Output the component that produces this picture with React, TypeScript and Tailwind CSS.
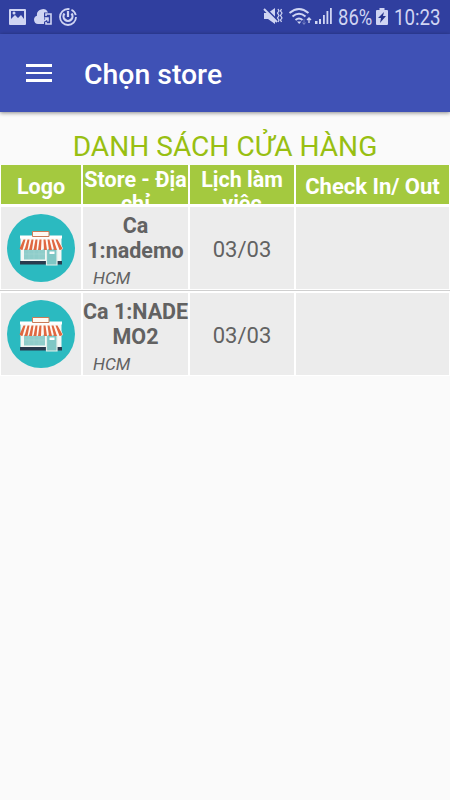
import React from "react";

const stores = [
  { name: ["Ca", "1:nademo"], address: "HCM", date: "03/03" },
  { name: ["Ca 1:NADE", "MO2"], address: "HCM", date: "03/03" },
];

const columns = "grid grid-cols-[80px_105px_104px_153px] gap-x-[2px] pl-px pr-px";

function StatusBar() {
  return (
    <div className="flex h-[34px] shrink-0 items-center justify-between bg-[#303f9f] pl-[9px] pr-[10px] text-[#d0d5f3]">
      <svg width="70" height="18" viewBox="9 8 70 18" fill="none" aria-hidden="true">
        <path fill="currentColor" fillRule="evenodd" d="M10 9h15q1 0 1 1v14q0 1-1 1H10q-1 0-1-1V10q0-1 1-1Zm1 2v8l4-4 3 3 3-3 3 4v-8H11Zm3 .5a1.500 1.500 0 1 1 0 3 1.500 1.500 0 0 1 0-3Z" />
        <path fill="currentColor" d="M45 24h-7a4.200 4.200 0 0 1-1-8.200 5.800 5.800 0 0 1 11-3.300h-4V24Z" />
        <path stroke="currentColor" strokeWidth="1.600" d="M46 16v-2h5v10h-5v-2M44 21l4-3m-3.500 0H48v3.500" />
        <circle cx="68" cy="17" r="8" stroke="currentColor" strokeWidth="1.800" strokeDasharray="39 2 7 2" />
        <path stroke="currentColor" strokeWidth="2.200" d="M68 11v6M64.500 13.500a4.500 4.500 0 1 0 7 0" />
      </svg>
      <div className="flex h-full items-center">
        <svg width="72" height="20" viewBox="262 8 72 20" fill="none" aria-hidden="true">
          <path fill="currentColor" d="M264 14h4l7-5v16l-7-5h-4Z" />
          <path d="m264 8 14 14" stroke="#303f9f" strokeWidth="2" />
          <path d="m264 10 13 13" stroke="currentColor" strokeWidth="1.900" />
          <path d="m278 10 1 2-1.500 2 1.500 2.500-1.500 2.500 1.500 2-1 2M281.500 10l-1 2 1.500 2-1.500 2.500 1.500 2.500-1.500 2 1 2" stroke="currentColor" strokeWidth="1.200" />
          <path d="M289.500 14q9.500-8 19 0M292.500 17.500q6.500-5.500 13 0M295.500 21q3.500-3 7 0" stroke="currentColor" strokeWidth="2" />
          <path d="m297 22.500 2.200 2.500 2.200-2.500Z" fill="currentColor" />
          <path d="M304 20v5m-1.500-1.500 1.500 2 1.500-2" stroke="currentColor" strokeOpacity=".4" />
          <path d="M309 24v-5m-2 2 2-2 2 2" stroke="currentColor" strokeWidth="1.400" />
          <path d="M315 25v-3h2.500v3Zm4 0v-5h2v5Zm4 0v-9h1.800v9Zm3.500 0V12h1.800v13Zm3.500 0V9h1.800v16Z" fill="currentColor" />
        </svg>
        <span className="ml-1 w-[34px] text-[22px] leading-[34px]">
          <span className="inline-block origin-left translate-y-px scale-x-[.84]">86%</span>
        </span>
        <svg className="ml-1" width="12" height="18" viewBox="0 0 12 18" aria-hidden="true">
          <path d="M3.500 0h5v2H11q1 0 1 1v13q0 1-1 1H1q-1 0-1-1V3q0-1 1-1h2.500Z" fill="currentColor" />
          <path d="m8 4-6 6h3l-1 5 6-7H7Z" fill="#26348d" />
        </svg>
        <span className="ml-[6px] w-[46px] text-[22px] leading-[34px]">
          <span className="inline-block origin-left translate-y-px scale-x-[.85]">10:23</span>
        </span>
      </div>
    </div>
  );
}

function StoreLogo() {
  return (
    <svg width="76" height="76" viewBox="0 0 76 76" role="img" aria-label="Store">
      <circle cx="38" cy="38" r="34" fill="#2bbac0" />
      <path d="M17.500 28h41v24h-41Z" fill="#f4f8f5" />
      <path d="M17 25.500h42v3H17Z" fill="#fff" />
      <path d="M29.500 21.500h16.500v5H29.500Z" fill="#fffaf2" stroke="#c97c58" />
      <path d="M21 38h21v11.500H21Z" fill="#8fcdca" />
      <path d="M21 44h21M26 39v10m5-10v10m5-10v10" stroke="#a5d7d3" strokeWidth=".5" />
      <path d="M17 51h42v3.500H17Z" fill="#293b4e" />
      <path d="M43.500 38h10.500v17H43.500Z" fill="#7fc7c5" stroke="#e2ede9" strokeWidth="1.200" />
      <path d="M46.500 41.500h5v2.500h-5Z" fill="#fff" />
      <path d="M20.500 29.500h35l4.500 9q-2 3-4.800 0-2.400 3-4.800 0-2.400 3-4.800 0-2.400 3-4.800 0-2.400 3-4.800 0-2.400 3-4.800 0-2.400 3-4.800 0-2.400 3-4.800 0-2.400 3-4.800 0Z" fill="#fffaf4" />
      <path d="M20.500 29.500h2l-3 10.500q-1.500 0-3-1.500Zm4 0h2l-2 10.500h-3Zm4 0h2l-1.500 10.500h-3Zm4 0h2l-1 10.500h-3Zm4 0h2l-.5 10.500h-3Zm4 0h2l1.500 10.500h-3Zm4 0h2l2.500 10.500h-3Zm4 0h2l3.500 10.500h-3Zm4 0h2l5 9q-1 1.500-3 1.500Z" fill="#df6841" />
    </svg>
  );
}

function HeaderCell({ children, top = false, size = "text-[21.500px]" }: { children: React.ReactNode; top?: boolean; size?: string }) {
  return (
    <div className={`flex h-[39px] justify-center overflow-hidden bg-[#a4c93f] text-center font-bold leading-[24px] text-white ${size} ${top ? "items-start pt-[3px]" : "items-center pt-[4px]"}`}>
      <div className="whitespace-nowrap">{children}</div>
    </div>
  );
}

export default function App() {
  return (
    <div className="flex h-[800px] w-[450px] flex-col overflow-hidden bg-[#fafafa] font-[Roboto,'Noto_Sans',sans-serif]">
      <StatusBar />
      <header className="flex h-[78px] shrink-0 items-center bg-[#3f51b5] shadow-[0_1px_4px_rgba(0,0,0,.45)]">
        <button className="ml-[26px] flex w-[26px] flex-col gap-[5px]" aria-label="Menu">
          <span className="h-[2.500px] bg-white" />
          <span className="h-[2.500px] bg-white" />
          <span className="h-[2.500px] bg-white" />
        </button>
        <h1 className="ml-8 mt-[3px] text-[28.400px] font-medium leading-[34px] text-white">Chọn store</h1>
      </header>
      <main>
        <h2 className="h-[53px] whitespace-nowrap pt-[18px] text-center text-[28.100px] leading-[34px] text-[#98bf12]">DANH SÁCH CỬA HÀNG</h2>
        <div className={`${columns} bg-white pb-[3px]`}>
          <HeaderCell>Logo</HeaderCell>
          <HeaderCell top>Store - Địa<br />chỉ</HeaderCell>
          <HeaderCell top>Lịch làm<br />việc</HeaderCell>
          <HeaderCell size="text-[22px]">Check In/ Out</HeaderCell>
        </div>
        {stores.map((store, index) => (
          <section key={store.name.join("")} className={index ? "border-t border-[#cfcfcf] bg-white pt-[2px] pb-px" : "bg-white pb-px"}>
            <div className={`${columns} h-[82px] text-[#626262] *:bg-[#ececec]`}>
              <div className="flex items-center justify-center"><StoreLogo /></div>
              <div className="pt-[6px]">
                <div className="whitespace-nowrap text-center text-[21.500px] font-bold leading-[25px]">{store.name[0]}<br />{store.name[1]}</div>
                <div className="pl-[10px] pt-[4px] text-[17.200px] italic leading-[22px]">{store.address}</div>
              </div>
              <div className="flex items-center justify-center pt-[2px] text-[22px]">{store.date}</div>
              <div />
            </div>
          </section>
        ))}
      </main>
    </div>
  );
}
